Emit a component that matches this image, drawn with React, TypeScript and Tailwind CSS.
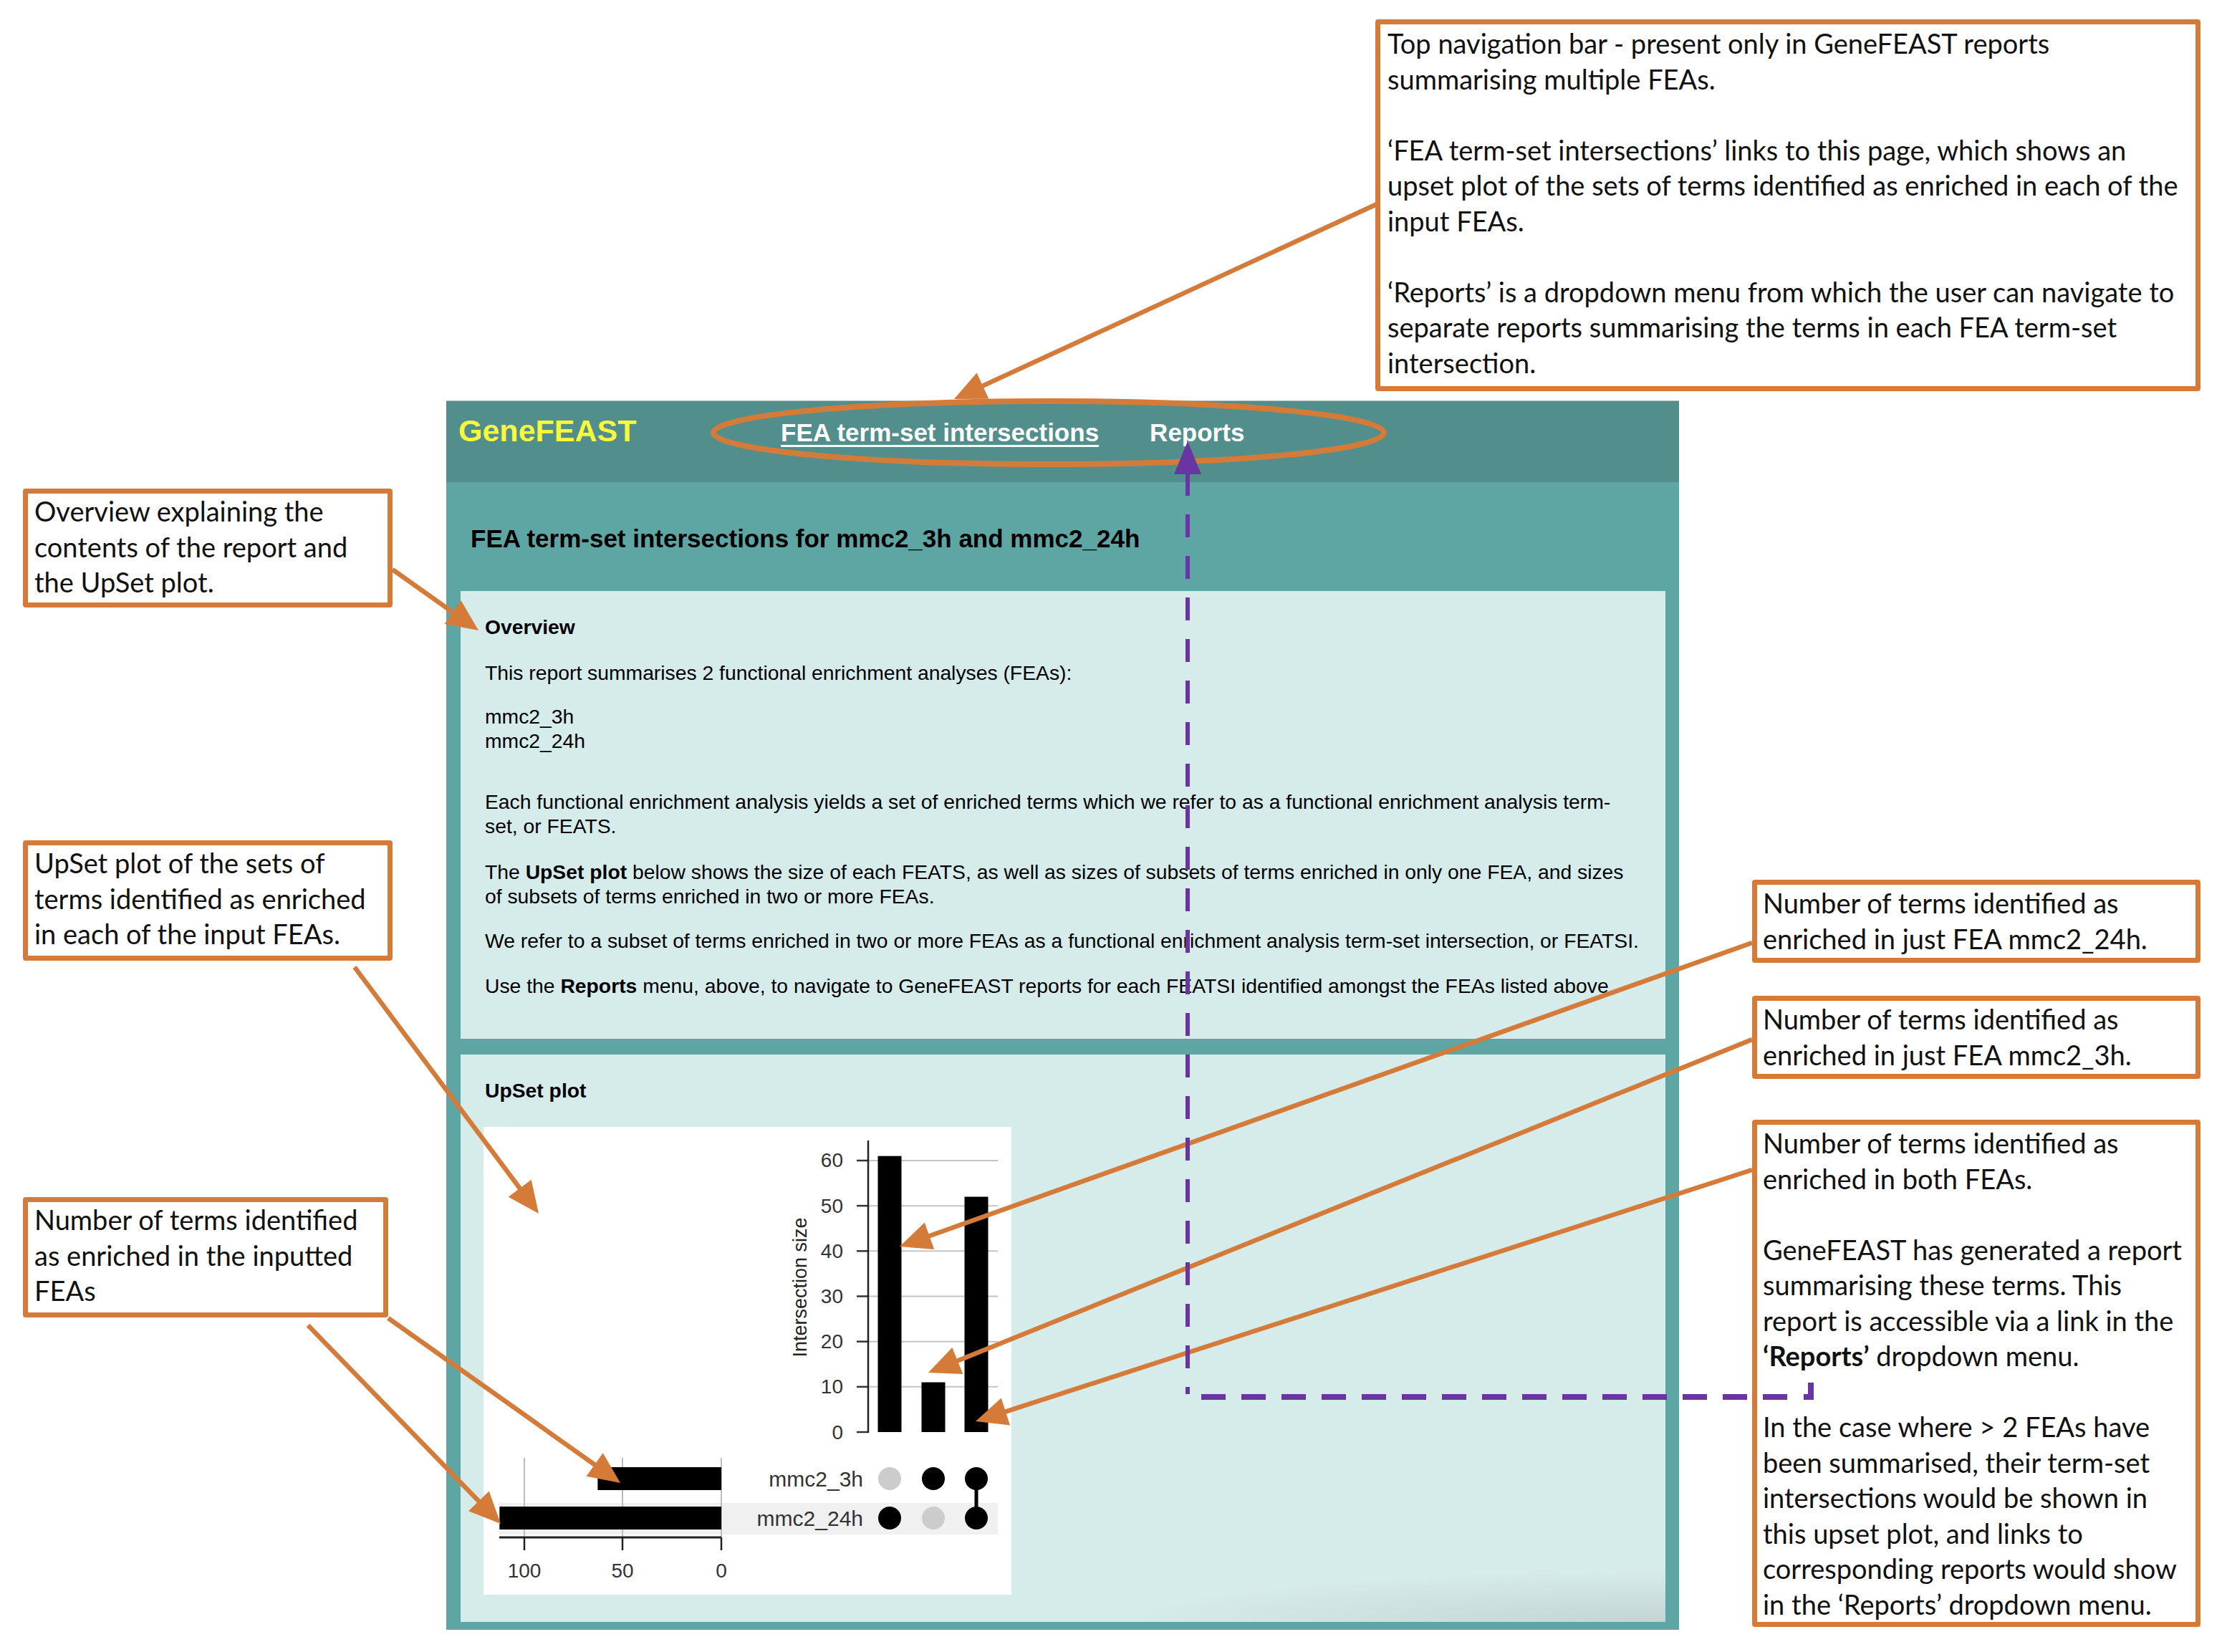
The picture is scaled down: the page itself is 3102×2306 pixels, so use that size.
import React from "react";

const ORANGE = "#d57b3a";
const PURPLE = "#6a35a2";

function Arrow({ from, to }: { from: [number, number]; to: [number, number] }) {
  const [x1, y1] = from;
  const [x2, y2] = to;
  const len = Math.hypot(x2 - x1, y2 - y1);
  const ux = (x2 - x1) / len;
  const uy = (y2 - y1) / len;
  const head = 44;
  const half = 20;
  const bx = x2 - ux * head;
  const by = y2 - uy * head;
  const px = -uy;
  const py = ux;
  return (
    <g>
      <line x1={x1} y1={y1} x2={bx + ux * 6} y2={by + uy * 6} stroke={ORANGE} strokeWidth={6.5} />
      <polygon
        points={`${x2},${y2} ${bx + px * half},${by + py * half} ${bx - px * half},${by - py * half}`}
        fill={ORANGE}
      />
    </g>
  );
}

function UpSetChart() {
  const y0 = 426;
  const per = 6.317;
  const cols = [567, 628, 688];
  const bars = [61, 11, 52];
  const ticks = [0, 10, 20, 30, 40, 50, 60];
  const axisX = 332;
  const unit = 2.74;
  const sets = [
    { name: "mmc2_3h", size: 63, y: 491, on: [false, true, true] },
    { name: "mmc2_24h", size: 113, y: 546, on: [true, false, true] },
  ];
  return (
    <svg width={737} height={653} viewBox="0 0 737 653" className="block">
      <g fontFamily="'Liberation Sans', Arial, sans-serif">
        {ticks.map((t) => (
          <g key={t}>
            {t > 0 && <line x1={537} x2={718} y1={y0 - t * per} y2={y0 - t * per} stroke="#c4c4c4" strokeWidth={2} />}
            <line x1={521} x2={537} y1={y0 - t * per} y2={y0 - t * per} stroke="#333" strokeWidth={2.5} />
            <text x={502} y={y0 - t * per} textAnchor="end" dominantBaseline="central" fontSize={28} fill="#333">
              {t}
            </text>
          </g>
        ))}
        <line x1={537} x2={537} y1={19} y2={y0 + 1} stroke="#222" strokeWidth={2.5} />
        <text
          x={442}
          y={224}
          fontSize={27}
          fill="#222"
          textAnchor="middle"
          dominantBaseline="central"
          transform="rotate(-90 442 224)"
        >
          Intersection size
        </text>
        {bars.map((v, i) => (
          <rect key={i} x={cols[i] - 16.5} y={y0 - v * per} width={33} height={v * per} fill="#000" />
        ))}

        <rect x={21} y={525} width={697} height={44} fill="#f0f0f0" />
        {[57, 194, 332].map((x) => (
          <line key={x} x1={x} x2={x} y1={462} y2={573} stroke="#bdbdbd" strokeWidth={2} />
        ))}
        {sets.map((s) => (
          <g key={s.name}>
            <rect x={axisX - s.size * unit} y={s.y - 16} width={s.size * unit} height={32} fill="#000" />
            <text x={530} y={s.y} textAnchor="end" dominantBaseline="central" fontSize={30} fill="#333">
              {s.name}
            </text>
          </g>
        ))}
        <line x1={22} x2={332} y1={573} y2={573} stroke="#222" strokeWidth={3} />
        {[
          { x: 57, l: "100" },
          { x: 194, l: "50" },
          { x: 332, l: "0" },
        ].map((t) => (
          <g key={t.l}>
            <line x1={t.x} x2={t.x} y1={573} y2={591} stroke="#222" strokeWidth={2.5} />
            <text x={t.x} y={619} textAnchor="middle" dominantBaseline="central" fontSize={28} fill="#333">
              {t.l}
            </text>
          </g>
        ))}
        <line x1={cols[2]} x2={cols[2]} y1={491} y2={546} stroke="#000" strokeWidth={5} />
        {sets.map((s) =>
          cols.map((c, i) => (
            <circle key={s.name + i} cx={c} cy={s.y} r={16} fill={s.on[i] ? "#000" : "#cccccc"} />
          ))
        )}
      </g>
    </svg>
  );
}

function Callout({ className, children }: { className: string; children: React.ReactNode }) {
  return (
    <div
      className={`absolute bg-white border-[7px] border-[#d57b3a] rounded-[4px] whitespace-nowrap font-['Lato',sans-serif] text-[38px] leading-[49.5px] text-[#111] ${className}`}
    >
      {children}
    </div>
  );
}

export default function App() {
  return (
    <div className="relative w-[3102px] h-[2306px] bg-white overflow-hidden">
      {/* GeneFEAST report screenshot */}
      <div className="absolute left-[623px] top-[559px] w-[1721px] h-[1716px] flex flex-col bg-[#5ea6a4] font-['Liberation_Sans',Arial,sans-serif] text-black">
        <nav className="h-[114px] shrink-0 bg-[#528e8b] border-t border-[#a8bcbb] flex items-baseline pt-[17px] pl-[17px]">
          <span className="w-[450px] text-[43px] leading-[48px] font-bold text-[#f8f83c]">GeneFEAST</span>
          <span className="text-[35px] leading-[48px] font-bold text-white underline decoration-[3px] underline-offset-[5px]">
            FEA term-set intersections
          </span>
          <span className="ml-[71px] text-[35px] leading-[48px] font-bold text-white">Reports</span>
        </nav>

        <div className="flex flex-col pl-[20px] pr-[19px]">
          <h1 className="mt-[59px] pl-[14px] text-[35px] leading-[40px] font-bold">
            FEA term-set intersections for mmc2_3h and mmc2_24h
          </h1>

          <section className="mt-[53px] h-[625px] bg-[#d6ecea] pt-[33px] pl-[34px] text-[28.3px] leading-[34px]">
            <div className="w-[1625px]">
              <p className="font-bold">Overview</p>
              <p className="mt-[30px]">This report summarises 2 functional enrichment analyses (FEAs):</p>
              <p className="mt-[27px]">
                mmc2_3h
                <br />
                mmc2_24h
              </p>
              <p className="mt-[51px]">
                Each functional enrichment analysis yields a set of enriched terms which we refer to as a functional
                enrichment analysis term-
                <br />
                set, or FEATS.
              </p>
              <p className="mt-[30px]">
                The <b>UpSet plot</b> below shows the size of each FEATS, as well as sizes of subsets of terms enriched
                in only one FEA, and sizes
                <br />
                of subsets of terms enriched in two or more FEAs.
              </p>
              <p className="mt-[28px]">
                We refer to a subset of terms enriched in two or more FEAs as a functional enrichment analysis term-set
                intersection, or FEATSI.
              </p>
              <p className="mt-[29px]">
                Use the <b>Reports</b> menu, above, to navigate to GeneFEAST reports for each FEATSI identified
                amongst the FEAs listed above.
              </p>
            </div>
          </section>

          <section className="mt-[22px] h-[792px] pt-[33px] pl-[32px] bg-[radial-gradient(45%_9%_at_100%_100%,#c3d4d3,#d6ecea)]">
            <p className="pl-[2px] text-[28.3px] leading-[34px] font-bold">UpSet plot</p>
            <div className="mt-[34px] w-[737px] h-[653px] bg-white">
              <UpSetChart />
            </div>
          </section>
        </div>
      </div>

      {/* annotation callouts */}
      <Callout className="left-[1920px] top-[27px] w-[1152px] h-[519px] pl-[10px] pt-[2px]">
        Top navigation bar - present only in GeneFEAST reports
        <br />
        summarising multiple FEAs.
        <br />
        <br />
        ‘FEA term-set intersections’ links to this page, which shows an
        <br />
        upset plot of the sets of terms identified as enriched in each of the
        <br />
        input FEAs.
        <br />
        <br />
        ‘Reports’ is a dropdown menu from which the user can navigate to
        <br />
        separate reports summarising the terms in each FEA term-set
        <br />
        intersection.
      </Callout>

      <Callout className="left-[32px] top-[682px] w-[516px] h-[166px] pl-[9px]">
        Overview explaining the
        <br />
        contents of the report and
        <br />
        the UpSet plot.
      </Callout>

      <Callout className="left-[32px] top-[1173px] w-[516px] h-[168px] pl-[9px]">
        UpSet plot of the sets of
        <br />
        terms identified as enriched
        <br />
        in each of the input FEAs.
      </Callout>

      <Callout className="left-[32px] top-[1671px] w-[510px] h-[168px] pl-[9px]">
        Number of terms identified
        <br />
        as enriched in the inputted
        <br />
        FEAs
      </Callout>

      <Callout className="left-[2446px] top-[1228px] w-[626px] h-[116px] pl-[8px] pt-[1px]">
        Number of terms identified as
        <br />
        enriched in just FEA mmc2_24h.
      </Callout>

      <Callout className="left-[2446px] top-[1390px] w-[626px] h-[116px] pl-[8px] pt-[1px]">
        Number of terms identified as
        <br />
        enriched in just FEA mmc2_3h.
      </Callout>

      <Callout className="left-[2446px] top-[1563px] w-[626px] h-[708px] pl-[8px] pt-[1px]">
        Number of terms identified as
        <br />
        enriched in both FEAs.
        <br />
        <br />
        GeneFEAST has generated a report
        <br />
        summarising these terms. This
        <br />
        report is accessible via a link in the
        <br />
        <b>‘Reports’</b> dropdown menu.
        <br />
        <br />
        In the case where &gt; 2 FEAs have
        <br />
        been summarised, their term-set
        <br />
        intersections would be shown in
        <br />
        this upset plot, and links to
        <br />
        corresponding reports would show
        <br />
        in the ‘Reports’ dropdown menu.
      </Callout>

      {/* arrows, ellipse and dashed link drawn over the figure */}
      <svg className="absolute inset-0 pointer-events-none" width={3102} height={2306} viewBox="0 0 3102 2306">
        <ellipse cx={1464} cy={604} rx={468} ry={44} fill="none" stroke={ORANGE} strokeWidth={8} />
        <Arrow from={[1922, 285]} to={[1332, 557]} />
        <Arrow from={[548, 795]} to={[668, 880]} />
        <Arrow from={[495, 1350]} to={[752, 1694]} />
        <Arrow from={[542, 1840]} to={[866, 2070]} />
        <Arrow from={[430, 1850]} to={[699, 2127]} />
        <Arrow from={[2446, 1316]} to={[1256, 1740]} />
        <Arrow from={[2446, 1451]} to={[1296, 1916]} />
        <Arrow from={[2446, 1633]} to={[1362, 1984]} />

        <polygon points="1658,616 1677,662 1639,662" fill={PURPLE} />
        <line x1={1658} y1={660} x2={1658} y2={1946} stroke={PURPLE} strokeWidth={6} strokeDasharray="32 26" />
        <line x1={1677} y1={1950} x2={2500} y2={1950} stroke={PURPLE} strokeWidth={8} strokeDasharray="34 22" />
        <polyline points="2518,1950 2528,1950 2528,1930" fill="none" stroke={PURPLE} strokeWidth={8} />
      </svg>
    </div>
  );
}
